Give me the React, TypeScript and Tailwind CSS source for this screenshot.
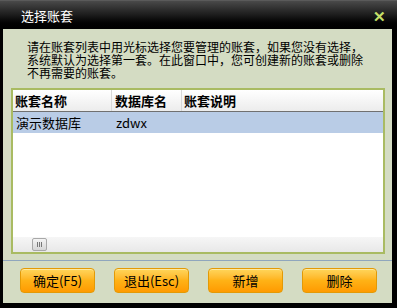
import React from 'react';

const cjk = { fontFamily: '"Noto Sans CJK SC", "Liberation Sans", sans-serif' };

const intro = [
  '请在账套列表中用光标选择您要管理的账套，如果您没有选择，',
  '系统默认为选择第一套。在此窗口中，您可创建新的账套或删除',
  '不再需要的账套。',
];

function OrangeButton({ label }: { label: string }) {
  return (
    <button
      className="w-[75px] h-[25px] rounded-[4px] border border-[#e39a06] bg-gradient-to-b from-[#ffd65a] via-[#ffb215] to-[#ff9a00] text-[13px] text-black leading-none shadow-[inset_0_1px_0_#ffe9a0]"
      style={cjk}
    >
      {label}
    </button>
  );
}

export default function App() {
  return (
    <div className="w-[397px] h-[308px] bg-black flex flex-col overflow-hidden" style={cjk}>
      {/* Title bar */}
      <div className="h-[29px] shrink-0 flex items-center justify-between pl-[21px] pr-[11px] bg-gradient-to-b from-[#4a4a4a] via-[#1c1c1c] to-[#000000] border-t border-[#5a5a5a]">
        <span className="text-[13px] text-white leading-none">选择账套</span>
        <span className="text-[#c6e06a] text-[15px] font-bold leading-none">✕</span>
      </div>

      {/* Body */}
      <div className="flex-1 ml-[3px] mr-[5px] mb-[5px] bg-[#d4dcc3] flex flex-col">
        <div className="pt-[11px] pl-[24px] flex flex-col">
          {intro.map((line) => (
            <div key={line} className="h-[13px] text-[12px] leading-[13px] text-black whitespace-nowrap">
              {line}
            </div>
          ))}
        </div>

        {/* Table panel */}
        <div className="mt-[9px] ml-[8px] mr-[7px] h-[166px] border-2 border-[#a9bb62] bg-white flex flex-col">
          <div className="h-[22px] flex text-[13px] font-bold text-black bg-gradient-to-b from-white to-[#ececec] border-b border-[#707070]">
            <div className="w-[99px] pl-[2px] flex items-center border-r border-[#d8d8d8]">账套名称</div>
            <div className="w-[70px] pl-[3px] flex items-center border-r border-[#d8d8d8]">数据库名</div>
            <div className="flex-1 pl-[2px] flex items-center">账套说明</div>
          </div>
          <div className="h-[21px] flex text-[13px] text-black bg-[#b9cce6]">
            <div className="w-[99px] pl-[3px] flex items-center">演示数据库</div>
            <div className="w-[70px] pl-[4px] flex items-center">zdwx</div>
            <div className="flex-1" />
          </div>
          <div className="flex-1" />
          <div className="h-[15px] bg-gradient-to-b from-[#f6f6f6] to-[#e8e8e8] flex items-center pl-[19px]">
            <div className="w-[15px] h-[13px] rounded-[2px] border border-[#a8a8a8] bg-gradient-to-b from-[#f4f4f4] to-[#d6d6d6] flex items-center justify-center gap-[1px]">
              <div className="w-px h-[5px] bg-[#777]" />
              <div className="w-px h-[5px] bg-[#777]" />
              <div className="w-px h-[5px] bg-[#777]" />
            </div>
          </div>
        </div>

        <div className="mt-[6px] h-px bg-[#8fa6bd]" />

        {/* Buttons */}
        <div className="mt-[7px] pl-[17px] flex gap-[19px]">
          <OrangeButton label="确定(F5)" />
          <OrangeButton label="退出(Esc)" />
          <OrangeButton label="新增" />
          <OrangeButton label="删除" />
        </div>
      </div>
    </div>
  );
}
